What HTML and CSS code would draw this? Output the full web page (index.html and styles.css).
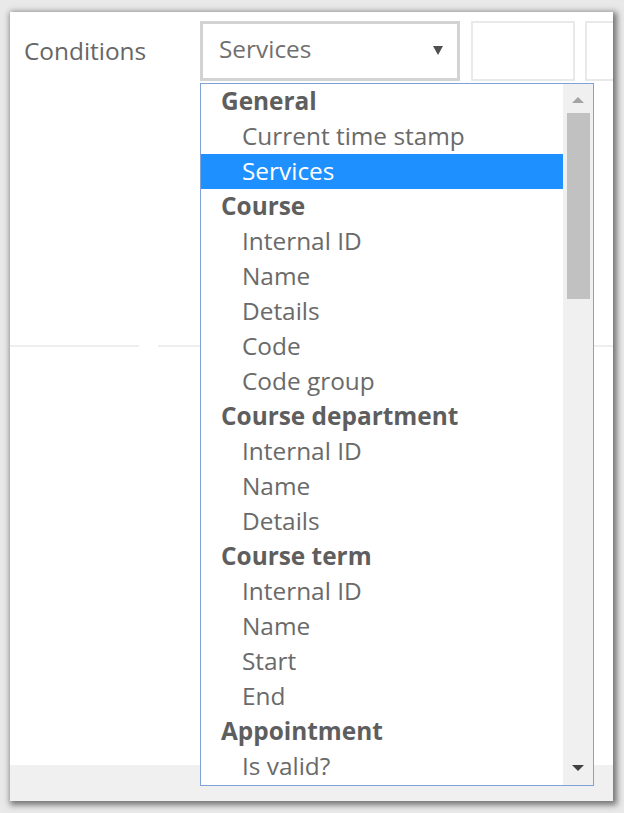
FILE: index.html
```html
<!DOCTYPE html>
<html lang="en">
<head>
<meta charset="utf-8">
<title>Conditions</title>
<link rel="stylesheet" href="styles.css">
</head>
<body>
<div class="window">
  <div class="form-row">
    <div class="label">Conditions</div>
    <div class="select">
      <span class="select-value">Services</span>
      <span class="caret"></span>
    </div>
    <div class="ghost-box"></div>
    <div class="ghost-box second"></div>
  </div>
  <div class="divider">
    <span class="seg first"></span>
    <span class="seg rest"></span>
  </div>
  <div class="fill"></div>
  <div class="footer"></div>

  <div class="dropdown">
    <ul class="options">
      <li class="group">General</li>
      <li class="item">Current time stamp</li>
      <li class="item selected">Services</li>
      <li class="group">Course</li>
      <li class="item">Internal ID</li>
      <li class="item">Name</li>
      <li class="item">Details</li>
      <li class="item">Code</li>
      <li class="item">Code group</li>
      <li class="group">Course department</li>
      <li class="item">Internal ID</li>
      <li class="item">Name</li>
      <li class="item">Details</li>
      <li class="group">Course term</li>
      <li class="item">Internal ID</li>
      <li class="item">Name</li>
      <li class="item">Start</li>
      <li class="item">End</li>
      <li class="group">Appointment</li>
      <li class="item">Is valid?</li>
    </ul>
    <div class="scrollbar">
      <div class="sb-btn up"><span class="tri-up"></span></div>
      <div class="thumb"></div>
      <div class="sb-track"></div>
      <div class="sb-btn down"><span class="tri-down"></span></div>
    </div>
  </div>
</div>
</body>
</html>
```

FILE: styles.css
```css
* {
  box-sizing: border-box;
}

html, body {
  margin: 0;
  padding: 0;
}

body {
  background: #e9e9e9;
  padding: 12px 11px 11px 10px;
  font-family: "Open Sans", "Liberation Sans", sans-serif;
  color: #666;
}

.window {
  position: relative;
  width: 603px;
  height: 789px;
  background: #fff;
  box-shadow: 2px 2px 6px 2px rgba(0, 0, 0, 0.5);
  overflow: hidden;
  display: flex;
  flex-direction: column;
}

.form-row {
  display: flex;
  align-items: stretch;
  margin-top: 9px;
  height: 60px;
  flex: none;
}

.label {
  width: 190px;
  padding-left: 14px;
  font-size: 24.4px;
  line-height: 60px;
  color: #666;
  flex: none;
}

.select {
  width: 260px;
  flex: none;
  border: 3px solid #d3d3d3;
  display: flex;
  align-items: center;
  justify-content: space-between;
  padding: 0 14px 0 16px;
}

.select-value {
  font-size: 24.4px;
  color: #707070;
  margin-top: -5px;
}

.caret {
  width: 0;
  height: 0;
  border-left: 5px solid transparent;
  border-right: 5px solid transparent;
  border-top: 9px solid #505050;
  margin-top: -1px;
}

.ghost-box {
  flex: none;
  width: 104px;
  margin-left: 11px;
  border: 2px solid #e9e9e9;
}

.ghost-box.second {
  margin-left: 10px;
  width: 100px;
}

.divider {
  margin-top: 264px;
  display: flex;
  height: 2px;
  flex: none;
}

.seg {
  height: 2px;
  background: #eeeeee;
}

.seg.first {
  width: 129px;
}

.seg.rest {
  margin-left: 19px;
  flex: 1;
}

.fill {
  flex: 1;
}

.footer {
  height: 36px;
  background: #f0f0f0;
  flex: none;
}

.dropdown {
  position: absolute;
  top: 71px;
  left: 190px;
  width: 394px;
  height: 703px;
  border: 1px solid #7fa3d8;
  background: #fff;
  display: flex;
  overflow: hidden;
}

.options {
  list-style: none;
  margin: 0;
  padding: 0;
  width: 362px;
  flex: none;
  overflow: hidden;
}

.options li {
  height: 35px;
  line-height: 33px;
  font-size: 24.4px;
  white-space: nowrap;
}

.group {
  padding-left: 20px;
  font-weight: 700;
  color: #5e5e5e;
}

.item {
  padding-left: 41px;
  color: #6a6a6a;
}

.item.selected {
  background: #1e90ff;
  color: #fff;
}

.scrollbar {
  width: 30px;
  flex: none;
  background: #f0f0f0;
  display: flex;
  flex-direction: column;
}

.sb-btn {
  height: 29px;
  flex: none;
  display: flex;
  justify-content: center;
  align-items: center;
}

.sb-btn.down {
  height: 34px;
}

.tri-up {
  width: 0;
  height: 0;
  border-left: 6px solid transparent;
  border-right: 6px solid transparent;
  border-bottom: 6px solid #a3a3a3;
  margin-top: 3px;
}

.tri-down {
  width: 0;
  height: 0;
  border-left: 6px solid transparent;
  border-right: 6px solid transparent;
  border-top: 6px solid #404040;
}

.thumb {
  height: 186px;
  margin: 0 3px 0 4px;
  background: #c1c1c1;
  flex: none;
}

.sb-track {
  flex: 1;
}
```
